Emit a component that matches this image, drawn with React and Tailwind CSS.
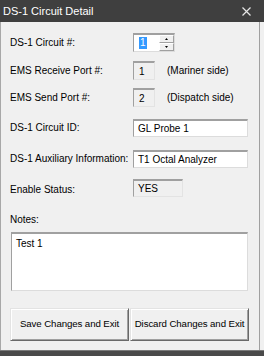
import React from "react";

const font = { fontFamily: '"Liberation Sans", Arial, sans-serif' };

function Row({ label, children, mt }) {
  return (
    <div className={`flex items-center ${mt}`}>
      <div className="w-[123px] text-[10px] leading-none text-black">{label}</div>
      {children}
    </div>
  );
}

const sunkenGray =
  "border-t-2 border-l border-r border-b border-t-[#a0a0a0] border-l-[#a0a0a0] border-r-[#e3e3e3] border-b-[#e3e3e3] bg-[#f0f0f0]";
const sunkenWhite =
  "border-t-2 border-l border-r border-b border-t-[#a0a0a0] border-l-[#a0a0a0] border-r-[#dcdcdc] border-b-[#dcdcdc] bg-white";

function Btn({ children, w }) {
  return (
    <div
      className={`${w} h-[33px] flex items-center justify-center whitespace-nowrap text-[9.7px] tracking-[-0.1px] text-black bg-[#f0f0f0] border border-t-[#e3e3e3] border-l-[#e3e3e3] border-r-[#696969] border-b-[#696969] shadow-[inset_1px_1px_0_#ffffff,inset_-1px_-1px_0_#a0a0a0]`}
    >
      {children}
    </div>
  );
}

export default function App() {
  return (
    <div className="w-[264px] h-[356px] flex flex-col bg-[#f0f0f0]" style={font}>
      <div className="h-[22px] bg-[#3f3f3f] flex items-center pl-[3px] pr-[13px] justify-between">
        <span className="text-white text-[11px] leading-none">DS-1 Circuit Detail</span>
        <svg width="9" height="9" viewBox="0 0 9 9">
          <path d="M0.5 0.5 L8.5 8.5 M8.5 0.5 L0.5 8.5" stroke="#e6e6e6" strokeWidth="1.2" />
        </svg>
      </div>
      <div className="flex h-[328px]">
        <div className="w-[259px] bg-[#f0f0f0] border-l border-l-[#a8a8a8] pl-[9px] flex flex-col">
          <Row label="DS-1 Circuit #:" mt="mt-[11px]">
            <div className={`w-[42px] h-[19px] flex ${sunkenWhite} border-t`}>
              <div className="flex-1 flex items-center pl-[5px]">
                <span className="bg-[#3399ff] text-white text-[10px] leading-[12px] px-[1px]">1</span>
              </div>
              <div className="w-[15px] flex flex-col">
                <div className="flex-1 flex items-center justify-center bg-[#f0f0f0] border border-t-white border-l-white border-r-[#a0a0a0] border-b-[#a0a0a0]">
                  <svg width="3" height="2" viewBox="0 0 3 2"><path d="M1.5 0 L3 2 L0 2 Z" fill="#000" /></svg>
                </div>
                <div className="flex-1 flex items-center justify-center bg-[#f0f0f0] border border-t-white border-l-white border-r-[#a0a0a0] border-b-[#a0a0a0]">
                  <svg width="3" height="2" viewBox="0 0 3 2"><path d="M0 0 L3 0 L1.5 2 Z" fill="#000" /></svg>
                </div>
              </div>
            </div>
          </Row>
          <Row label="EMS Receive Port #:" mt="mt-[9px]">
            <div className={`w-[22px] h-[19px] ${sunkenGray} text-[10px] flex items-center pl-[5px]`}>1</div>
            <span className="ml-[12px] text-[10px]">(Mariner side)</span>
          </Row>
          <Row label="EMS Send Port #:" mt="mt-[8px]">
            <div className={`w-[22px] h-[19px] ${sunkenGray} text-[10px] flex items-center pl-[5px]`}>2</div>
            <span className="ml-[12px] text-[10px]">(Dispatch side)</span>
          </Row>
          <Row label="DS-1 Circuit ID:" mt="mt-[12px]">
            <div className={`w-[115px] h-[18px] ${sunkenWhite} text-[10px] flex items-center pl-[4px]`}>GL Probe 1</div>
          </Row>
          <Row label="DS-1 Auxiliary Information:" mt="mt-[13px]">
            <div className={`w-[115px] h-[18px] ${sunkenWhite} text-[10px] flex items-center pl-[4px]`}>T1 Octal Analyzer</div>
          </Row>
          <Row label={<span className="relative top-[2px]">Enable Status:</span>} mt="mt-[11px]">
            <div className={`w-[50px] h-[18px] ${sunkenGray} text-[10px] flex items-center pl-[4px] pb-[1px]`}>YES</div>
          </Row>
          <div className="mt-[16px] h-[13px] text-[10px] leading-[13px]">Notes:</div>
          <div className={`mt-[6px] ml-[1px] w-[237px] h-[59px] ${sunkenWhite} text-[10px] pl-[4px] pt-[4px] leading-[12px]`}>Test 1</div>
          <div className="mt-[17px] flex gap-[1px]">
            <Btn w="w-[119px]">Save Changes and Exit</Btn>
            <Btn w="w-[119px]">Discard Changes and Exit</Btn>
          </div>
        </div>
        <div className="w-[1px] bg-[#a0a0a0]" />
        <div className="flex-1 bg-[#f0f0f0]" />
      </div>
      <div className="h-[6px] bg-[#4a4a4a] border-t border-t-[#7a7a7a]" />
    </div>
  );
}
